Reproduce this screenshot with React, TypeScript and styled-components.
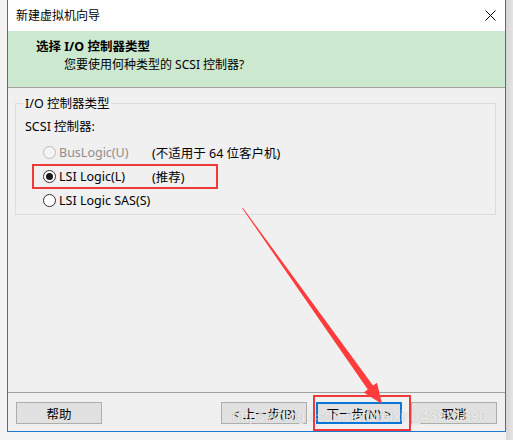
import React from "react";
import styled, { createGlobalStyle } from "styled-components";

const Global = createGlobalStyle`
  html, body { margin: 0; padding: 0; }
  body {
    background: #f2f2f2;
    width: 513px;
    height: 440px;
    overflow: hidden;
    font-family: "Noto Sans", "Noto Sans CJK SC", sans-serif;
    font-size: 12px;
    color: #000;
  }
  #root { position: relative; width: 513px; height: 440px; }
`;

const Stage = styled.div`
  position: relative;
  width: 513px;
  height: 440px;
  background: linear-gradient(to right, #f3f3f3 0, #f3f3f3 506px, #d6d6d6 506px, #e4e4e4 513px);
`;

const Window = styled.div`
  margin-left: 7px;
  width: 499px;
  height: 432px;
  box-sizing: border-box;
  border: 1px solid #1c7ad4;
  border-top: none;
  background: #f0f0f0;
  display: flex;
  flex-direction: column;
`;

const TitleBar = styled.div`
  height: 31px;
  flex: none;
  background: #fff;
  display: flex;
  align-items: center;
  justify-content: space-between;
  padding-left: 8px;
`;

const TitleText = styled.span`
  font-size: 12px;
  line-height: 16px;
  color: #000;
`;

const CloseButton = styled.div`
  width: 30px;
  height: 31px;
  display: flex;
  align-items: center;
  justify-content: center;
`;

const Header = styled.div`
  height: 57px;
  flex: none;
  box-sizing: border-box;
  background: #cce8cf;
  border-bottom: 1px solid #a0a0a0;
  padding: 7px 0 0 28px;
  display: flex;
  flex-direction: column;
`;

const HeaderTitle = styled.div`
  font-weight: bold;
  font-size: 12.5px;
  line-height: 18px;
`;

const HeaderSub = styled.div`
  font-size: 12px;
  line-height: 18px;
  padding-left: 28px;
`;

const Body = styled.div`
  flex: 1;
  padding: 15px 9px 0 7px;
  display: flex;
  flex-direction: column;
  font-size: 12.5px;
`;

const Group = styled.div`
  position: relative;
  height: 112px;
  box-sizing: border-box;
  border: 1px solid #dcdcdc;
  padding: 14px 0 0 9px;
`;

const Legend = styled.span`
  position: absolute;
  top: -9px;
  left: 7px;
  padding: 0 2px;
  background: #f0f0f0;
  line-height: 18px;
`;

const SubLabel = styled.div`
  line-height: 18px;
`;

const Options = styled.div`
  margin-top: 4px;
  padding-left: 18px;
  display: flex;
  flex-direction: column;
`;

const OptionRow = styled.div<{ $disabled?: boolean }>`
  height: 24px;
  display: grid;
  grid-template-columns: 109px auto;
  align-items: center;
  color: ${(p) => (p.$disabled ? "#8d8d8d" : "#000")};
`;

const RadioLabel = styled.div`
  display: flex;
  align-items: center;
  gap: 3px;
`;

const Radio = styled.span<{ $checked?: boolean; $disabled?: boolean }>`
  width: 13px;
  height: 13px;
  box-sizing: border-box;
  border-radius: 50%;
  border: 1px solid ${(p) => (p.$disabled ? "#bcbcbc" : "#333")};
  background: ${(p) => (p.$disabled ? "#f4f4f4" : "#fff")};
  display: flex;
  align-items: center;
  justify-content: center;
  &::after {
    content: "";
    width: 7px;
    height: 7px;
    border-radius: 50%;
    background: #1a1a1a;
    display: ${(p) => (p.$checked ? "block" : "none")};
  }
`;

const Note = styled.span`
  color: #000;
`;

const Footer = styled.div`
  flex: none;
  border-top: 1px solid #a0a0a0;
  padding: 9px 8px 7px 8px;
  display: flex;
  align-items: center;
`;

const Spacer = styled.div`
  flex: 1;
`;

const Buttons = styled.div`
  display: flex;
  gap: 9px;
`;

const Button = styled.button<{ $primary?: boolean }>`
  width: 86px;
  height: 22px;
  box-sizing: border-box;
  margin: 0;
  padding: 0;
  font-family: "Noto Sans", "Noto Sans CJK SC", sans-serif;
  font-size: 12.5px;
  color: #000;
  background: #e1e1e1;
  border: ${(p) => (p.$primary ? "2px solid #0a76d6" : "1px solid #adadad")};
  display: flex;
  align-items: center;
  justify-content: center;
`;

const Annotations = styled.svg`
  position: absolute;
  left: 0;
  top: 0;
  pointer-events: none;
`;

const Watermark = styled.div`
  position: absolute;
  left: 232px;
  top: 407px;
  font-family: "Liberation Sans", Arial, sans-serif;
  font-size: 15px;
  line-height: 18px;
  color: rgba(255, 255, 255, 0.8);
  text-shadow: 0 0 1px rgba(110, 110, 110, 0.5);
  pointer-events: none;
  white-space: nowrap;
`;

const CloseIcon = () => (
  <svg width="11" height="11" viewBox="0 0 11 11">
    <path d="M0.5 0.5 L10.5 10.5 M10.5 0.5 L0.5 10.5" stroke="#000" strokeWidth="1" fill="none" />
  </svg>
);

export default function App() {
  return (
    <Stage>
      <Global />
      <Window>
        <TitleBar>
          <TitleText>新建虚拟机向导</TitleText>
          <CloseButton>
            <CloseIcon />
          </CloseButton>
        </TitleBar>
        <Header>
          <HeaderTitle>选择 I/O 控制器类型</HeaderTitle>
          <HeaderSub>您要使用何种类型的 SCSI 控制器?</HeaderSub>
        </Header>
        <Body>
          <Group>
            <Legend>I/O 控制器类型</Legend>
            <SubLabel>SCSI 控制器:</SubLabel>
            <Options>
              <OptionRow $disabled>
                <RadioLabel>
                  <Radio $disabled />
                  BusLogic(U)
                </RadioLabel>
                <Note>(不适用于 64 位客户机)</Note>
              </OptionRow>
              <OptionRow>
                <RadioLabel>
                  <Radio $checked />
                  LSI Logic(L)
                </RadioLabel>
                <Note>(推荐)</Note>
              </OptionRow>
              <OptionRow>
                <RadioLabel>
                  <Radio />
                  LSI Logic SAS(S)
                </RadioLabel>
              </OptionRow>
            </Options>
          </Group>
          <Spacer />
        </Body>
        <Footer>
          <Button>帮助</Button>
          <Spacer />
          <Buttons>
            <Button>&lt; 上一步(B)</Button>
            <Button $primary>下一步(N) &gt;</Button>
            <Button>取消</Button>
          </Buttons>
        </Footer>
      </Window>
      <Watermark>https://blog.csdn.net/weixin_43921890</Watermark>
      <Annotations width="513" height="440" viewBox="0 0 513 440">
        <rect x="33" y="165" width="184" height="23" fill="none" stroke="#f03a3a" strokeWidth="2" />
        <rect x="314" y="396" width="96" height="34" fill="none" stroke="#f03a3a" strokeWidth="2" />
        <polygon
          points="242,208 243,208 373,385.5 377,382.8 382,404 363.8,392.6 367.8,389.6"
          fill="#ff3b3b"
        />
      </Annotations>
    </Stage>
  );
}
